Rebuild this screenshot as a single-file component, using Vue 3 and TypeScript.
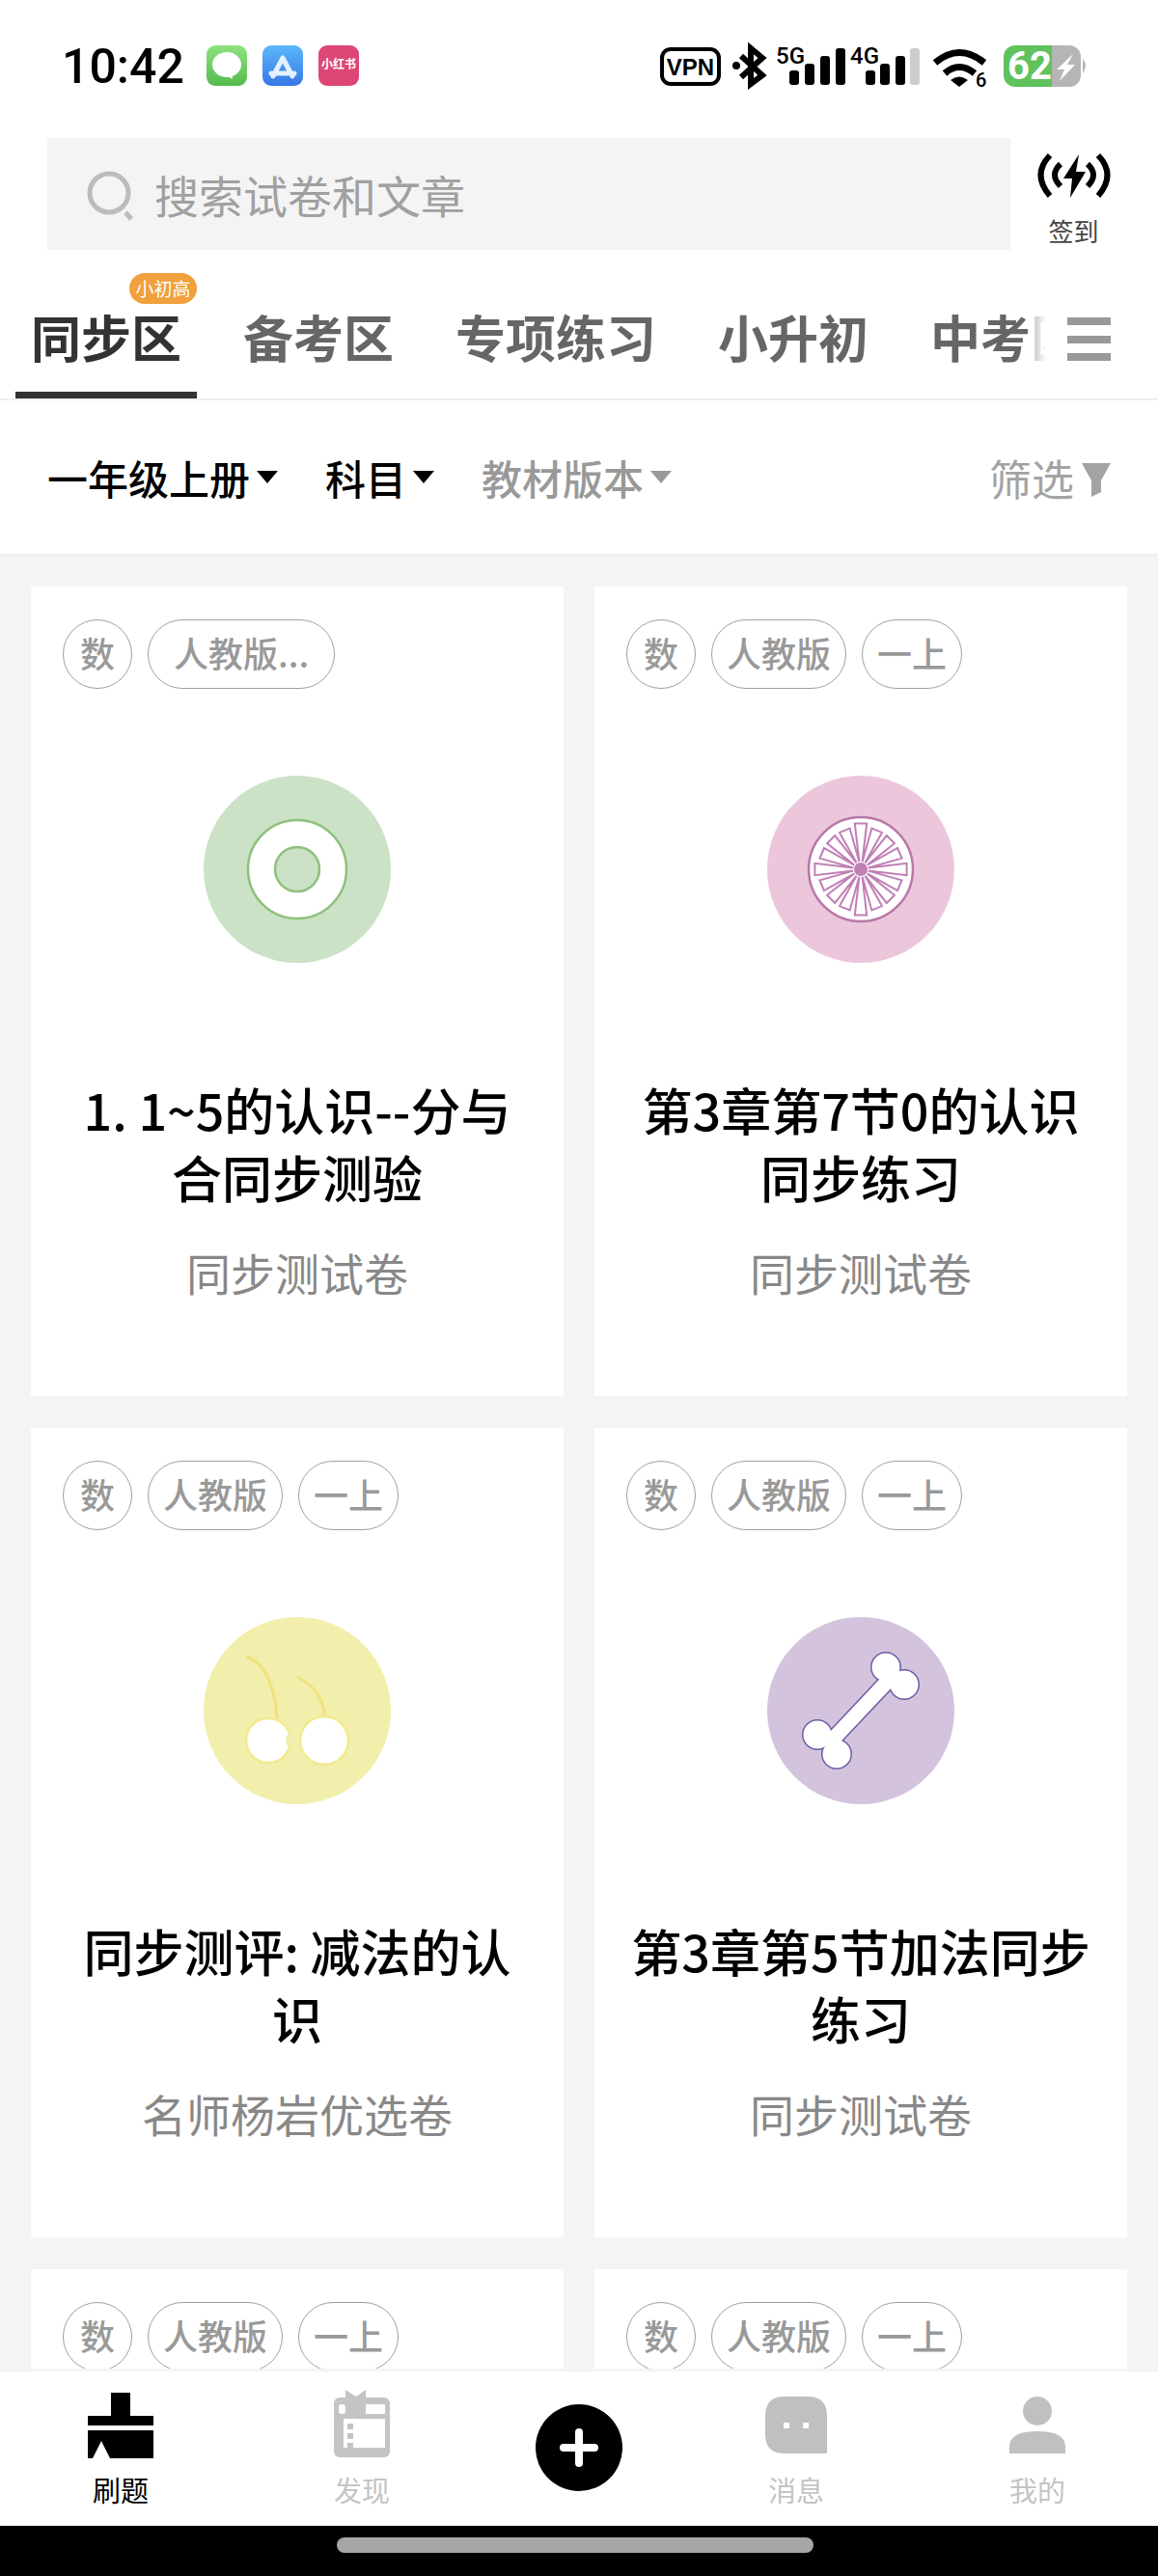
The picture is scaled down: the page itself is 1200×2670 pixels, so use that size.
<script setup lang="ts">
interface Card {
  icon: "ring" | "wheel" | "cherry" | "bone" | "none";
  tags: string[];
  title: string;
  sub: string;
}

const tabs = ["同步区", "备考区", "专项练习", "小升初", "中考区"];

const cards: Card[] = [
  { icon: "ring", tags: ["数", "人教版..."], title: "1. 1~5的认识--分与合同步测验", sub: "同步测试卷" },
  { icon: "wheel", tags: ["数", "人教版", "一上"], title: "第3章第7节0的认识同步练习", sub: "同步测试卷" },
  { icon: "cherry", tags: ["数", "人教版", "一上"], title: "同步测评: 减法的认识", sub: "名师杨岩优选卷" },
  { icon: "bone", tags: ["数", "人教版", "一上"], title: "第3章第5节加法同步练习", sub: "同步测试卷" },
  { icon: "none", tags: ["数", "人教版", "一上"], title: "", sub: "" },
  { icon: "none", tags: ["数", "人教版", "一上"], title: "", sub: "" },
];

// pink wheel: narrow arms running out from the hub and back
function wheelPath(): string {
  const n = 16;
  const cx = 97;
  const cy = 97;
  let d = "";
  for (let i = 0; i < n; i++) {
    const a = (i / n) * Math.PI * 2;
    const r = i % 4 === 0 ? 48 : 44;
    const w = 0.13;
    const next = a + Math.PI / n;
    const p1 = [cx + r * Math.cos(a - w), cy + r * Math.sin(a - w)];
    const p2 = [cx + r * Math.cos(a + w), cy + r * Math.sin(a + w)];
    const p3 = [cx + 8 * Math.cos(next), cy + 8 * Math.sin(next)];
    d += `${i === 0 ? "M" : "L"}${p1[0].toFixed(1)} ${p1[1].toFixed(1)}L${p2[0].toFixed(1)} ${p2[1].toFixed(1)}L${p3[0].toFixed(1)} ${p3[1].toFixed(1)}`;
  }
  return d + "Z";
}
const wheel = wheelPath();
</script>

<template>
  <div class="page">
    <header class="status">
      <div class="status-left">
        <span class="time">10:42</span>
        <svg class="app" viewBox="0 0 42 42">
          <defs>
            <linearGradient id="msgBg" x1="0" y1="0" x2="0" y2="1">
              <stop offset="0" stop-color="#8fe27f" />
              <stop offset="1" stop-color="#54bb4e" />
            </linearGradient>
            <linearGradient id="storeBg" x1="0" y1="0" x2="0" y2="1">
              <stop offset="0" stop-color="#5cb8fa" />
              <stop offset="1" stop-color="#3777e6" />
            </linearGradient>
          </defs>
          <rect width="42" height="42" rx="9" fill="url(#msgBg)" />
          <ellipse cx="21" cy="20" rx="15" ry="13" fill="#fff" />
          <path d="M18 30l9 5-1-6z" fill="#fff" />
        </svg>
        <svg class="app" viewBox="0 0 42 42">
          <rect width="42" height="42" rx="9" fill="url(#storeBg)" />
          <path d="M21 13L11 32M21 13L31 32M9 29H33" stroke="#e4f2fe" stroke-width="5" stroke-linecap="round" fill="none" />
        </svg>
        <div class="app red-app">小红书</div>
      </div>
      <svg class="status-right" viewBox="680 44 450 50" width="450" height="50">
        <rect x="686" y="51" width="59" height="36" rx="9" fill="none" stroke="#000" stroke-width="4" />
        <text x="715.5" y="78" text-anchor="middle" class="vpn">VPN</text>
        <circle cx="763" cy="68" r="4" fill="#000" />
        <path d="M768 58L790 78L778 87V50L790 60L768 80" fill="none" stroke="#000" stroke-width="6" />
        <text x="804" y="66" class="net">5G</text>
        <rect x="818" y="73" width="10" height="15" rx="3" />
        <rect x="834" y="66" width="10" height="22" rx="3" />
        <rect x="850" y="58" width="10" height="30" rx="3" />
        <rect x="866" y="50" width="10" height="38" rx="3" />
        <text x="881" y="66" class="net">4G</text>
        <rect x="897" y="73" width="10" height="15" rx="3" />
        <rect x="912" y="66" width="10" height="22" rx="3" />
        <rect x="928" y="58" width="10" height="30" rx="3" />
        <rect x="943" y="50" width="10" height="38" rx="3" fill="#ccc" />
        <path d="M969 65Q994 44 1020 65" fill="none" stroke="#000" stroke-width="7" />
        <path d="M979 76Q994 63 1010 76" fill="none" stroke="#000" stroke-width="7" />
        <path d="M985 83Q994 76 1003 83L994 90Z" fill="#000" />
        <text x="1011" y="90" class="wifi-six">6</text>
        <clipPath id="batClip"><rect x="1040" y="47" width="80" height="43" rx="12" /></clipPath>
        <g clip-path="url(#batClip)">
          <rect x="1040" y="47" width="50" height="43" fill="#5fc25c" />
          <rect x="1090" y="47" width="30" height="43" fill="#b5b5b5" />
        </g>
        <text x="1067" y="82" text-anchor="middle" class="bat">62</text>
        <path d="M1112 56L1095 72H1103L1098 84L1114 67H1106Z" fill="#fff" />
        <path d="M1122 61Q1128 68 1122 76Z" fill="#b5b5b5" />
      </svg>
    </header>

    <div class="search-row">
      <div class="search">
        <svg class="search-icon" viewBox="0 0 54 54" width="54" height="54">
          <circle cx="23" cy="23" r="20" fill="none" stroke="#bcbcbc" stroke-width="5" />
          <path d="M40 43l6 7" stroke="#bcbcbc" stroke-width="5" fill="none" />
        </svg>
        <span>搜索试卷和文章</span>
      </div>
      <div class="signin">
        <svg viewBox="1072 156 80 52" width="80" height="52">
          <path d="M1117 160L1101 185H1110L1108 205L1124 178H1114Z" fill="#000" />
          <g fill="none" stroke="#000" stroke-width="6">
            <path d="M1087 161Q1068 181 1087 203" />
            <path d="M1098 170Q1086 181 1098 193" />
            <path d="M1137 161Q1156 181 1137 203" />
            <path d="M1126 170Q1138 181 1126 193" />
          </g>
        </svg>
        <span>签到</span>
      </div>
    </div>

    <nav class="tabs">
      <div class="tab-scroll">
        <div v-for="(tab, i) in tabs" :key="tab" class="tab" :class="{ active: i === 0 }">
          <span v-if="i === 0" class="tab-badge">小初高</span>
          {{ tab }}
        </div>
        <div class="tab-fade"></div>
      </div>
      <div class="tab-menu"><i></i><i></i><i></i></div>
    </nav>

    <div class="filters">
      <div class="filter">一年级上册<i class="caret"></i></div>
      <div class="filter">科目<i class="caret"></i></div>
      <div class="filter muted">教材版本<i class="caret"></i></div>
      <div class="filter-right">
        筛选
        <svg viewBox="0 0 30 36" width="30" height="36">
          <path d="M0 0H30L20 18V30L10 35V18Z" fill="#a3a3a3" />
        </svg>
      </div>
    </div>

    <main class="list">
      <section v-for="(card, i) in cards" :key="i" class="card">
        <div class="tags">
          <span v-for="tag in card.tags" :key="tag" class="tag" :class="{ clipped: tag.endsWith('...') }">{{ tag }}</span>
        </div>
        <template v-if="card.icon !== 'none'">
          <svg class="cover" viewBox="0 0 194 194" width="194" height="194">
            <g v-if="card.icon === 'ring'">
              <circle cx="97" cy="97" r="97" fill="#cbe2c6" />
              <circle cx="97" cy="97" r="51" fill="#fff" stroke="#8fc07c" stroke-width="2.5" />
              <circle cx="97" cy="97" r="23" fill="#cbe2c6" stroke="#8fc07c" stroke-width="2.5" />
            </g>
            <g v-else-if="card.icon === 'wheel'">
              <circle cx="97" cy="97" r="97" fill="#ecc7dc" />
              <circle cx="97" cy="97" r="54" fill="#fff" stroke="#b878a8" stroke-width="2.5" />
              <path :d="wheel" fill="none" stroke="#c07fb5" stroke-width="2" />
              <circle cx="97" cy="97" r="7" fill="#c07fb5" />
            </g>
            <g v-else-if="card.icon === 'cherry'">
              <circle cx="97" cy="97" r="97" fill="#f2eeac" />
              <g fill="none" stroke="#efe27c" stroke-width="3">
                <path d="M44 41Q72 50 76 105" />
                <path d="M97 62Q124 76 126 105" />
              </g>
              <circle cx="67" cy="128" r="23" fill="#fff" stroke="#f3e98e" stroke-width="2.5" />
              <circle cx="95" cy="128" r="10" fill="#f2eeac" />
              <circle cx="125" cy="128" r="25" fill="#fff" stroke="#f3e98e" stroke-width="2.5" />
            </g>
            <g v-else>
              <circle cx="97" cy="97" r="97" fill="#d3c3dd" />
              <g fill="#6f5ba5">
                <circle cx="123" cy="52" r="16" />
                <circle cx="142" cy="70" r="16" />
                <circle cx="52" cy="122" r="16" />
                <circle cx="72" cy="142" r="16" />
              </g>
              <path d="M130 61L65 130" stroke="#6f5ba5" stroke-width="18" />
              <g fill="#fff">
                <circle cx="123" cy="52" r="14.5" />
                <circle cx="142" cy="70" r="14.5" />
                <circle cx="52" cy="122" r="14.5" />
                <circle cx="72" cy="142" r="14.5" />
              </g>
              <path d="M130 61L65 130" stroke="#fff" stroke-width="15" />
            </g>
          </svg>
          <h3 class="title">{{ card.title }}</h3>
          <p class="sub">{{ card.sub }}</p>
        </template>
      </section>
    </main>

    <footer class="tabbar">
      <div class="bar-item active">
        <svg viewBox="0 0 80 80" width="80" height="80">
          <path d="M30 6H50V30H74V40H6V30H30Z" />
          <path d="M6 45H74V74H29L20 56L11 74H6Z" />
        </svg>
        <span>刷题</span>
      </div>
      <div class="bar-item">
        <svg viewBox="0 0 80 80" width="80" height="80">
          <rect x="11" y="11" width="58" height="62" rx="6" fill="#c4c4c4" />
          <rect x="21" y="33" width="43" height="30" fill="#fff" />
          <rect x="44" y="18" width="20" height="10" fill="#fff" />
          <rect x="16" y="18" width="7" height="10" rx="3" fill="#fff" />
          <path d="M23 3L34 10L44 3V23H23Z" fill="#c4c4c4" />
          <rect x="25" y="38" width="6" height="6" fill="#c4c4c4" />
          <rect x="25" y="48" width="6" height="6" fill="#c4c4c4" />
          <rect x="25" y="58" width="6" height="5" fill="#c4c4c4" />
        </svg>
        <span>发现</span>
      </div>
      <div class="bar-item plus-wrap">
        <div class="plus"><i></i><i></i></div>
      </div>
      <div class="bar-item">
        <svg viewBox="0 0 80 80" width="80" height="80">
          <path d="M28 10H52Q72 10 72 30V69H28Q8 69 8 49V30Q8 10 28 10Z" fill="#c0c0c0" />
          <rect x="27" y="37" width="6" height="6" fill="#fff" />
          <rect x="47" y="37" width="6" height="6" fill="#fff" />
        </svg>
        <span>消息</span>
      </div>
      <div class="bar-item">
        <svg viewBox="0 0 80 80" width="80" height="80">
          <ellipse cx="40" cy="25" rx="15" ry="15" fill="#c0c0c0" />
          <path d="M11 69V62Q11 46 40 46Q69 46 69 62V69Z" fill="#c0c0c0" />
        </svg>
        <span>我的</span>
      </div>
    </footer>

    <div class="navbar"><div class="pill"></div></div>
  </div>
</template>

<style scoped>
.page {
  width: 1200px;
  height: 2670px;
  display: flex;
  flex-direction: column;
  overflow: hidden;
  background: #fff;
  font-family: "Noto Sans CJK SC", "Noto Sans", sans-serif;
}

.status {
  height: 143px;
  flex-shrink: 0;
  box-sizing: border-box;
  padding: 44px 70px 0 64px;
  display: flex;
  justify-content: space-between;
  align-items: flex-start;
}

.status-left {
  display: flex;
  align-items: center;
  height: 50px;
}

.time {
  font-family: Roboto, sans-serif;
  font-size: 50px;
  font-weight: 500;
  line-height: 50px;
  color: #000;
  width: 150px;
}

.app {
  width: 42px;
  height: 42px;
  margin-right: 16px;
  margin-top: -2px;
  flex-shrink: 0;
}

.red-app {
  border-radius: 9px;
  background: #de4775;
  color: #fff;
  font-size: 12px;
  font-weight: 700;
  line-height: 38px;
  text-align: center;
  white-space: nowrap;
}

.status-right rect:not([fill]) {
  fill: #000;
}

.vpn {
  font-family: "Liberation Sans", sans-serif;
  font-size: 24px;
  font-weight: 700;
}

.net {
  font-family: Roboto, sans-serif;
  font-size: 24px;
  font-weight: 500;
}

.wifi-six {
  font-family: Roboto, sans-serif;
  font-size: 20px;
  font-weight: 500;
}

.bat {
  font-family: Roboto, sans-serif;
  font-size: 40px;
  font-weight: 700;
  fill: #fff;
}

.search-row {
  display: flex;
  height: 116px;
  flex-shrink: 0;
  padding-left: 49px;
}

.search {
  width: 998px;
  background: #f4f4f4;
  display: flex;
  align-items: center;
  padding-left: 41px;
  box-sizing: border-box;
  font-size: 46px;
  color: #a0a0a0;
  gap: 16px;
}

.search-icon {
  margin-top: 6px;
}

.signin {
  flex: 1;
  display: flex;
  flex-direction: column;
  align-items: center;
  padding-top: 13px;
  padding-right: 22px;
  font-size: 26px;
  line-height: 32px;
  color: #444;
  gap: 15px;
}

.tabs {
  height: 156px;
  flex-shrink: 0;
  box-sizing: border-box;
  display: flex;
  border-bottom: 2px solid #eee;
  padding-left: 16px;
}

.tab-scroll {
  position: relative;
  width: 1068px;
  display: flex;
  gap: 32px;
  overflow: hidden;
}

.tab {
  position: relative;
  flex-shrink: 0;
  box-sizing: border-box;
  height: 154px;
  padding: 64px 16px 0;
  border-bottom: 7px solid transparent;
  font-size: 52px;
  font-weight: 700;
  line-height: 52px;
  color: #666;
  white-space: nowrap;
}

.tab.active {
  color: #333;
  border-bottom-color: #333;
}

.tab-badge {
  position: absolute;
  left: 118px;
  top: 24px;
  width: 70px;
  height: 32px;
  border-radius: 16px;
  background: #f0a03c;
  color: #fff;
  font-size: 19px;
  font-weight: 400;
  line-height: 32px;
  text-align: center;
}

.tab-fade {
  position: absolute;
  right: 0;
  top: 0;
  bottom: 0;
  width: 18px;
  background: linear-gradient(to right, rgba(255, 255, 255, 0.5), #fff);
}

.tab-menu {
  margin-left: 22px;
  margin-top: 70px;
  width: 45px;
  height: 45px;
  display: flex;
  flex-direction: column;
  justify-content: space-between;
}

.tab-menu i {
  display: block;
  height: 8px;
  background: #999;
}

.filters {
  height: 161px;
  flex-shrink: 0;
  box-sizing: border-box;
  border-bottom: 2px solid #efefef;
  display: flex;
  align-items: center;
  padding: 0 49px;
  gap: 49px;
  font-size: 42px;
  font-weight: 500;
  color: #000;
}

.filter {
  display: flex;
  align-items: center;
  gap: 7px;
}

.caret {
  width: 0;
  height: 0;
  border-left: 11px solid transparent;
  border-right: 11px solid transparent;
  border-top: 13px solid #000;
}

.muted {
  color: #999;
}

.muted .caret {
  border-top-color: #999;
}

.filter-right {
  margin-left: auto;
  display: flex;
  align-items: center;
  gap: 8px;
  font-size: 44px;
  font-weight: 400;
  color: #a3a3a3;
}

.filter-right svg {
  margin-top: 6px;
}

.list {
  flex: 1;
  min-height: 0;
  overflow: hidden;
  background: #f4f4f4;
  padding: 32px 32px 0;
  display: grid;
  grid-template-columns: 552px 552px;
  grid-auto-rows: 839px;
  column-gap: 32px;
  row-gap: 33px;
}

.card {
  background: #fff;
  box-sizing: border-box;
  padding: 34px 33px 0;
  display: flex;
  flex-direction: column;
  align-items: center;
}

.tags {
  align-self: stretch;
  display: flex;
  gap: 16px;
}

.tag {
  box-sizing: border-box;
  height: 72px;
  min-width: 72px;
  padding: 0 15px;
  border: 1px solid #a0a0a0;
  border-radius: 36px;
  font-size: 36px;
  font-weight: 500;
  line-height: 66px;
  text-align: center;
  color: #999;
}

.tag.clipped {
  padding: 0 26px;
}

.cover {
  margin-top: 90px;
  flex-shrink: 0;
}

.title {
  margin: 117px -2px 0;
  font-size: 52px;
  font-weight: 500;
  line-height: 70px;
  text-align: center;
  color: #000;
}

.sub {
  margin: 33px 0 0;
  font-size: 46px;
  line-height: 60px;
  color: #888;
}

.tabbar {
  height: 163px;
  flex-shrink: 0;
  box-sizing: border-box;
  border-top: 3px solid #f4f4f4;
  display: grid;
  grid-template-columns: 250px 250px 200px 250px 250px;
  background: #fff;
}

.bar-item {
  display: flex;
  flex-direction: column;
  align-items: center;
  padding-top: 16px;
  font-size: 29px;
  line-height: 28px;
  color: #c4c4c4;
  gap: 12px;
}

.bar-item.active {
  color: #000;
}

.plus-wrap {
  padding-top: 34px;
}

.plus {
  position: relative;
  width: 90px;
  height: 90px;
  border-radius: 50%;
  background: #000;
}

.plus i {
  position: absolute;
  left: 25px;
  top: 41px;
  width: 40px;
  height: 8px;
  border-radius: 4px;
  background: #fff;
}

.plus i + i {
  transform: rotate(90deg);
}

.navbar {
  height: 52px;
  flex-shrink: 0;
  background: #000;
  padding-top: 12px;
  box-sizing: border-box;
}

.pill {
  width: 494px;
  height: 16px;
  margin-left: 349px;
  border-radius: 8px;
  background: #a6a6a6;
}
</style>
